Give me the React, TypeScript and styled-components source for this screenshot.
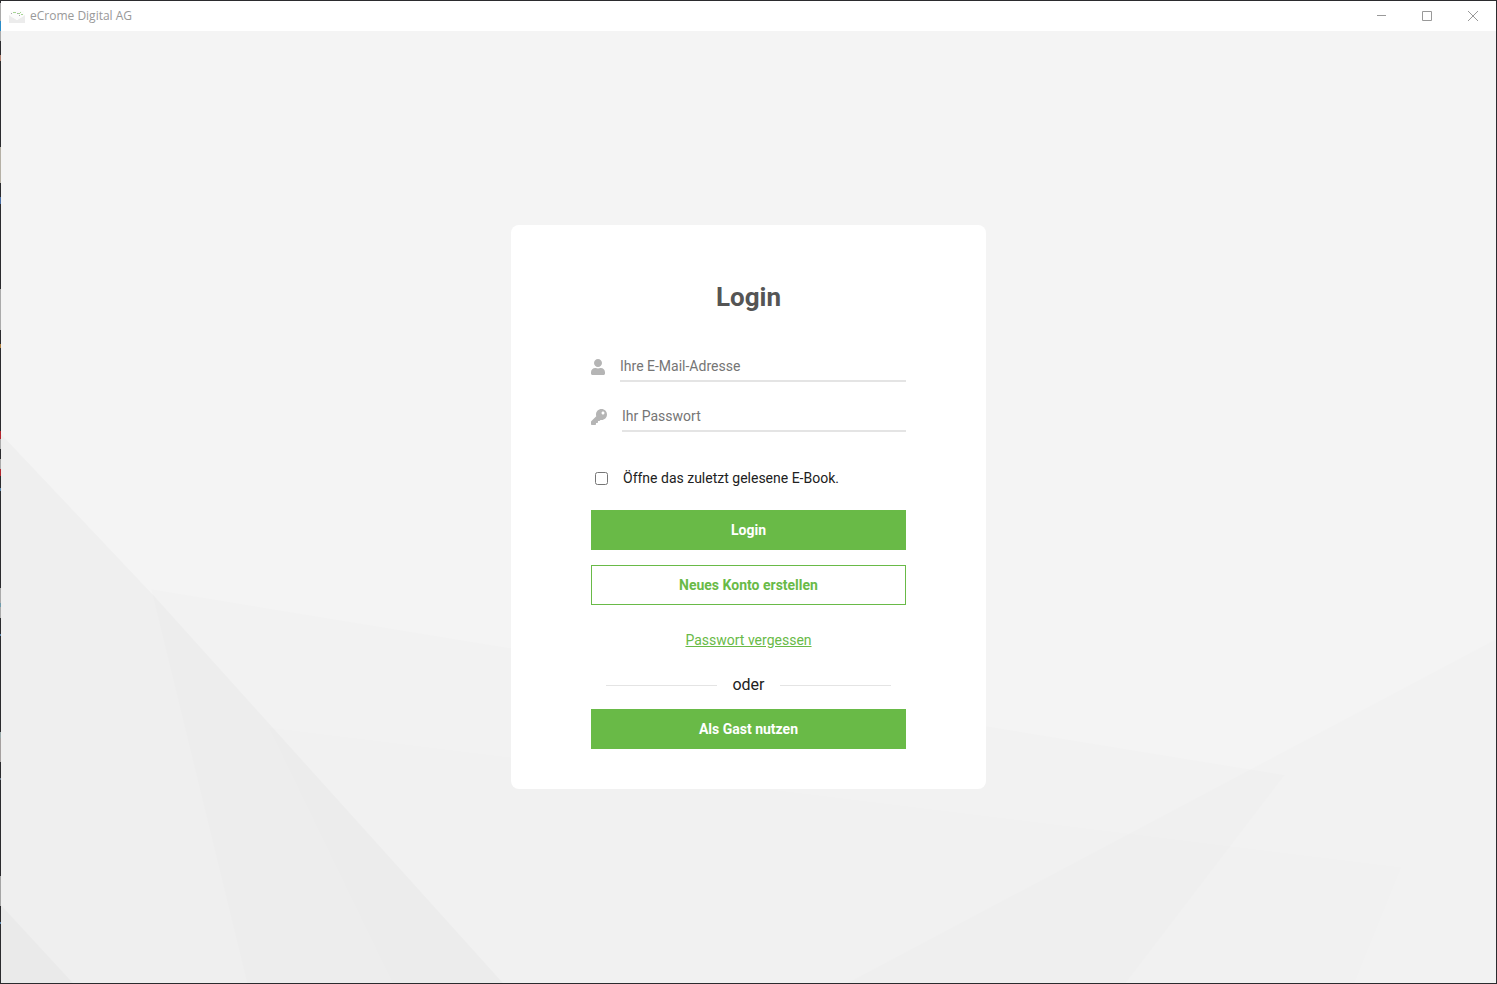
import React from "react";
import styled, { createGlobalStyle } from "styled-components";
import { FaUser, FaKey } from "react-icons/fa";

const GlobalStyle = createGlobalStyle`
  *, *::before, *::after { box-sizing: border-box; }
  body {
    margin: 0;
    font-family: Roboto, "Liberation Sans", sans-serif;
    font-size: 14px;
    color: #212121;
  }
`;

const green = "#69ba47";
const frame = "#2b2b2e";

const Window = styled.div`
  position: relative;
  display: flex;
  flex-direction: column;
  min-height: 100vh;
  border: 1px solid ${frame};
  background: #f4f4f4;
`;

/* Sliver of the desktop that shows along the window's left edge. */
const DesktopEdge = styled.div`
  position: absolute;
  top: 0;
  bottom: 0;
  left: -1px;
  width: 1px;
  background: linear-gradient(
    ${frame} 2px, #aaa 2px 20px, #2a8cc8 20px 30px, #aaa 30px 40px,
    ${frame} 40px 54px, #b08070 54px 60px,
    ${frame} 60px 146px, #b5b0a5 146px 182px,
    ${frame} 182px 196px, #4a6fa5 196px 203px,
    ${frame} 203px 288px, #aaa 288px 329px,
    ${frame} 329px 343px, #b08040 343px 347px,
    ${frame} 347px 430px, #b3262e 430px 438px, #aaa 438px 448px,
    ${frame} 448px 458px, #aaa 458px 468px, #b3262e 468px 475px,
    ${frame} 475px 487px, #5b87ad 487px 490px,
    ${frame} 490px 587px, #aaa 587px 602px, #6f9cac 602px 606px, #aaa 606px 617px,
    ${frame} 617px 633px, #5b87ad 633px 635px,
    ${frame} 635px 731px, #9aa 731px 737px, #a5a09f 737px 761px,
    ${frame} 761px 777px, #6f7f90 777px 779px,
    ${frame} 779px 875px, #a5a5a5 875px 905px,
    ${frame} 905px 921px, #5b87ad 921px 923px, ${frame} 923px
  );
`;

const TitleBar = styled.header`
  display: flex;
  align-items: center;
  height: 30px;
  padding-left: 8px;
  background: #fff;
`;

const Title = styled.span`
  flex: 1;
  margin-left: 5px;
  font: 12px/16px "Open Sans", "Noto Sans", sans-serif;
  color: #999;
`;

const WindowButton = styled.button`
  display: flex;
  align-items: center;
  justify-content: center;
  width: 46px;
  height: 30px;
  padding: 0;
  border: 0;
  background: none;
  color: #999;
`;

const Stage = styled.main`
  position: relative;
  display: flex;
  flex: 1;
  align-items: center;
  justify-content: center;
`;

const Backdrop = styled.svg`
  position: absolute;
  inset: 0;
  width: 100%;
  height: 100%;
`;

const Card = styled.form`
  position: relative;
  display: flex;
  flex-direction: column;
  width: 475px;
  padding: 56px 80px 40px;
  border-radius: 8px;
  background: #fff;
`;

const Heading = styled.h1`
  margin: 0 0 38px;
  font-size: 26px;
  line-height: 32px;
  font-weight: 700;
  text-align: center;
  color: #555;
`;

const Field = styled.label`
  display: flex;
  align-items: center;
  gap: 15px;
  height: 32px;
  margin-bottom: 18px;
  color: #b5b5b5;
`;

const UserIcon = styled(FaUser)`
  width: 14px;
  height: 16px;
`;

const KeyIcon = styled(FaKey)`
  width: 16px;
  height: 16px;
`;

const FieldInput = styled.input`
  flex: 1;
  min-width: 0;
  height: 30px;
  padding: 0;
  border: 0;
  border-bottom: 2px solid #e4e4e4;
  outline: 0;
  background: none;
  font: 14px/20px Roboto, "Liberation Sans", sans-serif;
  color: #333;

  &::placeholder { color: #757575; opacity: 1; }
`;

const CheckRow = styled.label`
  display: flex;
  align-items: center;
  gap: 15px;
  height: 19px;
  margin: 18px 0 22px;
  padding-left: 4px;
  line-height: 19px;
`;

const Checkbox = styled.input`
  width: 13px;
  height: 13px;
  margin: 0;
`;

const ActionButton = styled.button<{ $outlined?: boolean }>`
  height: 40px;
  padding: 0;
  border: 1px solid ${green};
  background: ${(p) => (p.$outlined ? "#fff" : green)};
  color: ${(p) => (p.$outlined ? green : "#fff")};
  font: 700 14px/20px Roboto, "Liberation Sans", sans-serif;

  & + & { margin-top: 15px; }
`;

const ForgotLink = styled.a`
  align-self: center;
  margin: 25px 0;
  line-height: 20px;
  color: ${green};
  text-decoration: underline;
`;

const Divider = styled.div`
  display: flex;
  align-items: center;
  gap: 15px;
  margin-bottom: 14px;
  padding: 0 15px;
  font-size: 16px;
  line-height: 20px;

  &::before, &::after {
    content: "";
    flex: 1;
    height: 1px;
    background: #e4e4e4;
  }
`;

function AppIcon() {
  return (
    <svg width="16" height="16" viewBox="0 0 16 16" aria-hidden="true">
      <path d="M0 7 L8 12 L16 7 V15 H0 Z" fill="#ececec" />
      <path d="M1 3 H15 V8 L8 12 L1 8 Z" fill="#fcfcfc" />
      <path d="M2 5.5 H3 M8 5.5 H9 M10 7.5 H11" stroke="#aaa" />
      <path d="M4 4.5 H7 M9 5.5 H11 M11 4.5 H12 M12 6.5 H14" stroke="#a5d593" />
    </svg>
  );
}

export default function App() {
  return (
    <>
      <GlobalStyle />
      <Window>
        <DesktopEdge />
        <TitleBar>
          <AppIcon />
          <Title>eCrome Digital AG</Title>
          <WindowButton type="button" aria-label="Minimieren">
            <svg width="10" height="10" stroke="currentColor"><path d="M1 4.5H11" overflow="visible" /></svg>
          </WindowButton>
          <WindowButton type="button" aria-label="Maximieren">
            <svg width="10" height="10" stroke="currentColor" fill="none"><path d="M.5 .5H9.5V9.5H.5Z" /></svg>
          </WindowButton>
          <WindowButton type="button" aria-label="Schließen">
            <svg width="10" height="10" stroke="currentColor"><path d="M0 0L10 10M10 0L0 10" /></svg>
          </WindowButton>
        </TitleBar>
        <Stage>
          <Backdrop viewBox="0 0 1495 952" preserveAspectRatio="none" aria-hidden="true">
            <path d="M150 558 L1284 744 L1125 952 H246 Z" fillOpacity=".008" />
            <path d="M267 696 L1401 836 L1354 952 H391 Z" fillOpacity=".004" />
            <path d="M1495 608 L846 952 H1495 Z" fillOpacity=".008" />
            <path d="M0 403 L155 567 L502 952 H0 Z" fillOpacity=".018" />
            <path d="M0 874 L72 952 H0 Z" fillOpacity=".018" />
          </Backdrop>
          <Card onSubmit={(e) => e.preventDefault()}>
            <Heading>Login</Heading>
            <Field>
              <UserIcon aria-hidden="true" />
              <FieldInput type="email" placeholder="Ihre E-Mail-Adresse" aria-label="Ihre E-Mail-Adresse" />
            </Field>
            <Field>
              <KeyIcon aria-hidden="true" />
              <FieldInput type="password" placeholder="Ihr Passwort" aria-label="Ihr Passwort" />
            </Field>
            <CheckRow>
              <Checkbox type="checkbox" />
              Öffne das zuletzt gelesene E-Book.
            </CheckRow>
            <ActionButton type="submit">Login</ActionButton>
            <ActionButton type="button" $outlined>Neues Konto erstellen</ActionButton>
            <ForgotLink href="#passwort">Passwort vergessen</ForgotLink>
            <Divider>oder</Divider>
            <ActionButton type="button">Als Gast nutzen</ActionButton>
          </Card>
        </Stage>
      </Window>
    </>
  );
}
